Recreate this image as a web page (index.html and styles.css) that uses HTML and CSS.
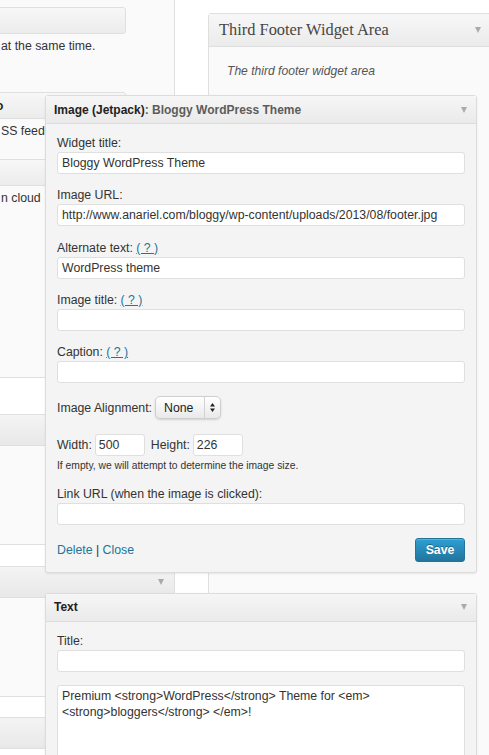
FILE: index.html
```html
<!DOCTYPE html>
<html>
<head>
<meta charset="utf-8">
<title>Widgets</title>
<link rel="stylesheet" href="styles.css">
</head>
<body>
<div class="screen">
  <div class="left">
    <div class="abox">
      <div class="aw aw-first">
        <div class="aw-bar"></div>
        <p class="aw-desc">at the same time.</p>
      </div>
      <div class="aw">
        <div class="aw-bar"><span class="aw-title">o</span></div>
        <p class="aw-desc">SS feeds</p>
      </div>
      <div class="aw">
        <div class="aw-bar"></div>
        <p class="aw-desc">n cloud</p>
      </div>
    </div>
    <div class="lbox">
      <div class="lhead"></div>
      <div class="lbody"></div>
    </div>
    <div class="lbox lbox-c">
      <div class="lhead"><span class="tri"></span></div>
      <div class="lbody"></div>
    </div>
    <div class="lbox lbox-d">
      <div class="lhead"></div>
    </div>
  </div>

  <div class="right">
    <div class="sidebar">
      <div class="sb-head">
        <h3 class="sb-title">Third Footer Widget Area</h3>
        <span class="tri"></span>
      </div>
      <div class="sb-body">
        <p class="sb-desc">The third footer widget area</p>

        <div class="widget">
          <div class="w-head">
            <h4 class="w-title">Image (Jetpack)<span class="w-sub">: Bloggy WordPress Theme</span></h4>
            <span class="tri"></span>
          </div>
          <div class="w-body">
            <div class="field">
              <label class="lbl">Widget title:</label>
              <input class="inp" type="text" value="Bloggy WordPress Theme">
            </div>
            <div class="field">
              <label class="lbl">Image URL:</label>
              <input class="inp" type="text" value="http://www.anariel.com/bloggy/wp-content/uploads/2013/08/footer.jpg">
            </div>
            <div class="field">
              <label class="lbl">Alternate text: <a class="help" href="#">( ? )</a></label>
              <input class="inp" type="text" value="WordPress theme">
            </div>
            <div class="field">
              <label class="lbl">Image title: <a class="help" href="#">( ? )</a></label>
              <input class="inp" type="text" value="">
            </div>
            <div class="field">
              <label class="lbl">Caption: <a class="help" href="#">( ? )</a></label>
              <input class="inp" type="text" value="">
            </div>
            <div class="align-row">
              <span class="lbl-inline">Image Alignment:</span>
              <div class="select">
                <span class="sel-val">None</span>
                <span class="sel-arrows">
                  <svg width="5" height="9" viewBox="0 0 5 9"><polygon points="0,3.5 2.5,0 5,3.5" fill="#222"/><polygon points="0,5.5 2.5,9 5,5.5" fill="#222"/></svg>
                </span>
              </div>
            </div>
            <div class="size-row">
              <span class="lbl-inline">Width:</span>
              <input class="inp inp-small" type="text" value="500">
              <span class="lbl-inline lbl-height">Height:</span>
              <input class="inp inp-small" type="text" value="226">
            </div>
            <p class="note">If empty, we will attempt to determine the image size.</p>
            <div class="field field-link">
              <label class="lbl">Link URL (when the image is clicked):</label>
              <input class="inp" type="text" value="">
            </div>
            <div class="actions">
              <span class="links"><a href="#">Delete</a> | <a href="#">Close</a></span>
              <button class="save" type="button">Save</button>
            </div>
          </div>
        </div>

        <div class="widget widget-text">
          <div class="w-head">
            <h4 class="w-title">Text</h4>
            <span class="tri"></span>
          </div>
          <div class="w-body">
            <div class="field">
              <label class="lbl">Title:</label>
              <input class="inp" type="text" value="">
            </div>
            <textarea class="txt">Premium &lt;strong&gt;WordPress&lt;/strong&gt; Theme for &lt;em&gt;
&lt;strong&gt;bloggers&lt;/strong&gt; &lt;/em&gt;!</textarea>
          </div>
        </div>
      </div>
    </div>
  </div>
</div>
</body>
</html>
```

FILE: styles.css
```css
* { box-sizing: border-box; }

html, body {
  margin: 0;
  padding: 0;
  width: 489px;
  height: 755px;
  overflow: hidden;
  background: #fff;
}

body {
  font-family: "Liberation Sans", Arial, sans-serif;
  font-size: 12.3px;
  line-height: 16px;
  color: #333;
}

.screen {
  display: flex;
  align-items: flex-start;
  width: 489px;
}

/* ---------- left column (behind) ---------- */
.left {
  flex: none;
  width: 175px;
}

.abox {
  height: 378px;
  background: #fafafa;
  border-right: 1px solid #dfdfdf;
  border-bottom: 1px solid #dfdfdf;
  padding-top: 7px;
  overflow: hidden;
}

.aw { margin-bottom: 20px; }
.aw-first { margin-bottom: 38px; }

.aw-bar {
  margin-left: -20px;
  width: 146px;
  height: 27px;
  border: 1px solid #dfdfdf;
  border-radius: 3px;
  background: linear-gradient(#f7f7f7, #ececec);
  display: flex;
  align-items: center;
  overflow: hidden;
}

.aw-title {
  margin-left: 15px;
  font-weight: bold;
  font-size: 12px;
  color: #222;
}

.aw-desc {
  margin: 4px 0 0;
  padding-left: 1px;
  white-space: nowrap;
  color: #333;
}

.lbox {
  margin-top: 36px;
  background: #fafafa;
  border-top: 1px solid #dfdfdf;
  border-right: 1px solid #dfdfdf;
  border-bottom: 1px solid #dfdfdf;
}
.lbox-c { margin-top: 21px; }
.lbox-d { margin-top: 20px; border-bottom: none; }

.lhead {
  height: 31px;
  border-bottom: 1px solid #dfdfdf;
  background: linear-gradient(#f4f4f4, #e8e8e8);
  display: flex;
  align-items: center;
  justify-content: flex-end;
  padding-right: 10px;
}

.lbody { height: 98px; }

.tri {
  display: inline-block;
  width: 0;
  height: 0;
  border-left: 3.5px solid transparent;
  border-right: 3.5px solid transparent;
  border-top: 6px solid #aaa;
}

/* ---------- right sidebar ---------- */
.right {
  flex: none;
  width: 285px;
  margin-left: 33px;
  margin-top: 13px;
}

.sidebar {
  border: 1px solid #dfdfdf;
  border-radius: 3px 3px 0 0;
  background: #fafafa;
  min-height: 900px;
}

.sb-head {
  height: 33px;
  border-bottom: 1px solid #dfdfdf;
  background: linear-gradient(#f7f7f7, #ebebeb);
  display: flex;
  align-items: center;
  justify-content: space-between;
  padding: 0 11px 0 10px;
}

.sb-title {
  margin: 0;
  font-family: "Liberation Serif", Georgia, serif;
  font-weight: normal;
  font-size: 16.4px;
  color: #464646;
}

.sb-body { padding-top: 16px; }

.sb-desc {
  margin: 0 0 16px;
  padding-left: 18px;
  font-style: italic;
  font-size: 12.1px;
  color: #555;
}

/* ---------- widgets (expanded over the left column) ---------- */
.widget {
  position: relative;
  z-index: 1;
  margin-left: -164px;
  margin-right: 15px;
  border: 1px solid #dcdcdc;
  border-radius: 3px;
  background: #f4f4f4;
  box-shadow: 0 1px 2px rgba(0, 0, 0, 0.08);
}

.widget-text {
  margin-top: 20px;
  border-bottom: none;
  border-radius: 3px 3px 0 0;
}

.w-head {
  height: 28px;
  border-bottom: 1px solid #dcdcdc;
  background: linear-gradient(#f6f6f6, #eaeaea);
  display: flex;
  align-items: center;
  justify-content: space-between;
  padding: 0 9px 0 8px;
}

.w-title {
  margin: 0;
  font-size: 12px;
  font-weight: bold;
  color: #222;
}

.w-sub { color: #5c5c5c; }

.w-body { padding: 11px 11px 10px; }

.field { margin-bottom: 13.3px; }
.field-link { margin-bottom: 13px; }

.lbl {
  display: block;
  height: 16px;
  margin-bottom: 1px;
  color: #333;
}

.help {
  color: #21759b;
  text-decoration: underline;
}

.inp {
  display: block;
  width: 100%;
  height: 22px;
  margin: 0;
  border: 1px solid #dfdfdf;
  border-radius: 3px;
  background: #fff;
  padding: 0 4px;
  font-family: "Liberation Sans", Arial, sans-serif;
  font-size: 12.3px;
  color: #333;
  outline: none;
}

.align-row {
  display: flex;
  align-items: center;
  height: 23px;
  margin-bottom: 14.5px;
}

.lbl-inline { color: #333; white-space: nowrap; }

.select {
  margin-left: 3px;
  display: flex;
  height: 23px;
  border: 1px solid #cfcfcf;
  border-radius: 5px;
  background: linear-gradient(#ffffff, #e9e9e9);
  box-shadow: 0 1px 2px rgba(0, 0, 0, 0.15);
}

.sel-val {
  width: 48px;
  padding-left: 8px;
  display: flex;
  align-items: center;
  font-size: 12.3px;
  color: #222;
}

.sel-arrows {
  width: 16px;
  border-left: 1px solid #d2d2d2;
  display: flex;
  align-items: center;
  justify-content: center;
}

.size-row {
  display: flex;
  align-items: center;
  height: 22px;
}

.inp-small {
  width: 50px;
  margin-left: 3px;
  padding: 0 3px;
}

.lbl-height { margin-left: 6px; }

.note {
  margin: 4px 0 14px;
  font-size: 10.3px;
  line-height: 12px;
  color: #333;
}

.actions {
  display: flex;
  align-items: center;
  justify-content: space-between;
  height: 24px;
}

.links { color: #333; }
.links a { color: #21759b; text-decoration: none; }

.save {
  width: 50px;
  height: 24px;
  margin: 0;
  padding: 0;
  border: 1px solid #21759b;
  border-radius: 3px;
  background: linear-gradient(#2e9fd2, #21759b);
  color: #fff;
  font-family: "Liberation Sans", Arial, sans-serif;
  font-size: 12.3px;
  font-weight: bold;
  text-shadow: 0 -1px 0 rgba(0, 0, 0, 0.3);
  box-shadow: inset 0 1px 0 rgba(120, 200, 230, 0.5);
}

.txt {
  display: block;
  width: 100%;
  height: 220px;
  margin: 0;
  border: 1px solid #dfdfdf;
  border-radius: 3px;
  background: #fff;
  padding: 2px 4px;
  font-family: "Liberation Sans", Arial, sans-serif;
  font-size: 12.3px;
  line-height: 16px;
  color: #333;
  resize: none;
  outline: none;
}
```
